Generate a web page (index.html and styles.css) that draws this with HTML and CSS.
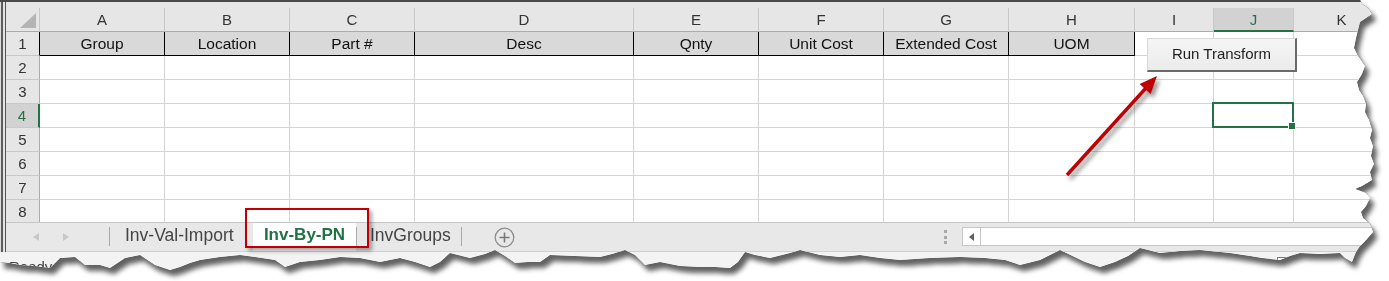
FILE: index.html
```html
<!DOCTYPE html>
<html lang="en">

<head>
    <meta charset="UTF-8">
    <title>Inv-By-PN</title>
    <link rel="stylesheet" href="styles.css">
</head>

<body>
    <div class="shot">
        <div class="paper">
            <div class="topline"></div>

            <div class="window">
                <div class="edge"></div>

                <div class="excel">
                    <div class="gridtop"></div>

                    <!-- sheet: row header + columns A..K -->
                    <div class="grid">
                        <div class="ch corner"></div>
                        <div class="ch">A</div>
                        <div class="ch">B</div>
                        <div class="ch">C</div>
                        <div class="ch">D</div>
                        <div class="ch">E</div>
                        <div class="ch">F</div>
                        <div class="ch">G</div>
                        <div class="ch">H</div>
                        <div class="ch">I</div>
                        <div class="ch cur">J</div>
                        <div class="ch">K</div>

                        <div class="rh r1">1</div>
                        <div class="c t">Group</div>
                        <div class="c t">Location</div>
                        <div class="c t">Part #</div>
                        <div class="c t">Desc</div>
                        <div class="c t">Qnty</div>
                        <div class="c t">Unit Cost</div>
                        <div class="c t">Extended Cost</div>
                        <div class="c t">UOM</div>
                        <div class="c"></div>
                        <div class="c"></div>
                        <div class="c"></div>

                        <div class="rh">2</div>
                        <div class="c"></div><div class="c"></div><div class="c"></div><div class="c"></div>
                        <div class="c"></div><div class="c"></div><div class="c"></div><div class="c"></div>
                        <div class="c"></div><div class="c"></div><div class="c"></div>

                        <div class="rh">3</div>
                        <div class="c"></div><div class="c"></div><div class="c"></div><div class="c"></div>
                        <div class="c"></div><div class="c"></div><div class="c"></div><div class="c"></div>
                        <div class="c"></div><div class="c"></div><div class="c"></div>

                        <div class="rh cur">4</div>
                        <div class="c"></div><div class="c"></div><div class="c"></div><div class="c"></div>
                        <div class="c"></div><div class="c"></div><div class="c"></div><div class="c"></div>
                        <div class="c"></div><div class="c sel"></div><div class="c"></div>

                        <div class="rh">5</div>
                        <div class="c"></div><div class="c"></div><div class="c"></div><div class="c"></div>
                        <div class="c"></div><div class="c"></div><div class="c"></div><div class="c"></div>
                        <div class="c"></div><div class="c"></div><div class="c"></div>

                        <div class="rh">6</div>
                        <div class="c"></div><div class="c"></div><div class="c"></div><div class="c"></div>
                        <div class="c"></div><div class="c"></div><div class="c"></div><div class="c"></div>
                        <div class="c"></div><div class="c"></div><div class="c"></div>

                        <div class="rh">7</div>
                        <div class="c"></div><div class="c"></div><div class="c"></div><div class="c"></div>
                        <div class="c"></div><div class="c"></div><div class="c"></div><div class="c"></div>
                        <div class="c"></div><div class="c"></div><div class="c"></div>

                        <div class="rh">8</div>
                        <div class="c"></div><div class="c"></div><div class="c"></div><div class="c"></div>
                        <div class="c"></div><div class="c"></div><div class="c"></div><div class="c"></div>
                        <div class="c"></div><div class="c"></div><div class="c"></div>
                    </div>

                    <!-- sheet tabs -->
                    <div class="tabbar">
                        <div class="nav">
                            <span class="tri-left"></span>
                            <span class="tri-right"></span>
                        </div>
                        <div class="sep"></div>
                        <div class="tab tab-first">Inv-Val-Import</div>
                        <div class="tab active">Inv-By-PN</div>
                        <div class="sep"></div>
                        <div class="tab tab-last">InvGroups</div>
                        <div class="sep"></div>
                        <div class="add">
                            <svg width="21" height="21" viewBox="0 0 21 21">
                                <circle cx="10.5" cy="10.5" r="9.3" fill="none" stroke="#8c8c8c" stroke-width="1.3"/>
                                <path d="M10.5 5.5v10M5.5 10.5h10" stroke="#7a7a7a" stroke-width="1.6"/>
                            </svg>
                        </div>
                        <div class="spacer"></div>
                        <div class="dots"></div>
                        <div class="hscroll">
                            <div class="hs-btn"><span class="hs-tri"></span></div>
                            <div class="hs-track"></div>
                        </div>
                    </div>
                </div>
            </div>

            <div class="status">
                <span class="ready">Ready</span>
                <svg class="view-icon" width="18" height="12" viewBox="0 0 18 12">
                    <rect x="0.5" y="0.5" width="17" height="11" fill="#fff" stroke="#7a7a7a"/>
                    <path d="M4 4h10M4 6.5h10M4 9h7" stroke="#7a7a7a"/>
                </svg>
            </div>

            <!-- things drawn over the sheet -->
            <div class="run-btn">Run Transform</div>
            <div class="mark"></div>
            <svg class="arrow" width="1389" height="281" viewBox="0 0 1389 281">
                <line x1="1067" y1="175" x2="1146" y2="88" stroke="#c00000" stroke-width="3.4"/>
                <polygon points="1157,76 1150.6,94 1139.6,84" fill="#c00000"/>
            </svg>
        </div>
    </div>
</body>

</html>
```

FILE: styles.css
```css
* {
    box-sizing: border-box;
}

body {
    margin: 0;
    background: #fff;
    font-family: "Liberation Sans", Arial, sans-serif;
}

/* torn screenshot look */
.shot {
    width: 1389px;
    height: 281px;
    filter: drop-shadow(0 0 0.6px rgba(0, 0, 0, 0.85)) drop-shadow(4px 6px 2.5px rgba(0, 0, 0, 0.62));
}

.paper {
    position: relative;
    width: 1389px;
    height: 281px;
    background: #fff;
    overflow: hidden;
    clip-path: polygon(0 0, 1360px 0, 1362px 4px, 1368px 8px, 1372px 14px, 1366px 18px, 1360px 22px, 1358px 30px,
        1356px 38px, 1354px 48px, 1358px 56px, 1365px 66px, 1362px 74px, 1357px 82px, 1359px 90px, 1363px 96px,
        1366px 104px, 1365px 112px, 1369px 120px, 1372px 130px, 1370px 138px, 1373px 146px, 1371px 156px,
        1374px 164px, 1370px 172px, 1372px 180px, 1362px 186px, 1355px 189px, 1366px 193px, 1370px 198px,
        1366px 206px, 1361px 212px, 1363px 218px, 1370px 224px, 1373px 232px, 1366px 240px, 1360px 246px,
        1356px 252px, 1352px 262px, 1345px 258px, 1340px 253px, 1320px 254px, 1300px 253px, 1290px 256px,
        1280px 260px, 1262px 258px, 1250px 256px, 1230px 253px, 1200px 250px, 1180px 251px, 1160px 253px,
        1140px 248px, 1128px 256px, 1115px 262px, 1100px 267px, 1085px 262px, 1060px 250px, 1050px 255px,
        1040px 260px, 1020px 265px, 1005px 260px, 985px 258px, 960px 257px, 930px 258px, 900px 260px,
        880px 258px, 860px 255px, 840px 257px, 820px 255px, 800px 250px, 790px 253px, 770px 258px,
        755px 255px, 745px 252px, 738px 262px, 730px 268px, 715px 267px, 700px 267px, 680px 266px,
        660px 262px, 645px 265px, 635px 255px, 625px 250px, 612px 254px, 600px 257px, 575px 256px,
        550px 255px, 540px 262px, 528px 262px, 515px 263px, 505px 256px, 495px 250px, 485px 254px,
        470px 258px, 458px 255px, 450px 253px, 440px 262px, 430px 267px, 415px 262px, 400px 258px,
        380px 262px, 360px 258px, 340px 257px, 320px 260px, 300px 262px, 285px 267px, 275px 260px,
        255px 257px, 240px 255px, 220px 257px, 200px 260px, 190px 263px, 180px 267px, 170px 270px,
        155px 265px, 140px 255px, 125px 258px, 110px 268px, 100px 265px, 85px 265px, 75px 257px,
        60px 258px, 50px 268px, 35px 266px, 20px 265px, 10px 263px, 0 262px);
}

.topline {
    height: 2px;
    background: #4a4a4a;
}

.window {
    display: flex;
    height: 250px;
}

.edge {
    width: 6px;
    background: linear-gradient(to right, #dedede 0 1px, #5c5c5c 1px 3px, #e4e4e4 3px 5px, #217346 5px 6px);
}

.excel {
    flex: 1;
    display: flex;
    flex-direction: column;
}

.gridtop {
    height: 6px;
    background: #e6e6e6;
}

/* sheet */
.grid {
    display: grid;
    grid-template-columns: 34px 125px 125px 125px 219px 125px 125px 125px 126px 79px 80px 1fr;
    grid-template-rows: repeat(8, 24px) 22px;
}

.grid > div {
    position: relative;
    border-right: 1px solid #d4d4d4;
    border-bottom: 1px solid #d4d4d4;
    background: #fff;
    font-size: 15px;
    line-height: 24px;
    text-align: center;
    white-space: nowrap;
}

.grid > div:nth-child(12n) {
    border-right: none;
}

.grid > div:nth-last-child(-n+12) {
    border-bottom: none;
}

.grid > .ch {
    background: #e6e6e6;
    color: #333;
    line-height: 23px;
    border-right-color: #c8c8c8;
    border-bottom-color: #ababab;
}

.grid > .ch.cur {
    background: #d2d2d2;
    color: #217346;
    border-bottom: 2px solid #217346;
}

.corner::after {
    content: '';
    position: absolute;
    right: 3px;
    bottom: 3px;
    width: 16px;
    height: 15px;
    background: #b4b4b4;
    clip-path: polygon(100% 0, 100% 100%, 0 100%);
}

.grid > .rh {
    background: #e6e6e6;
    color: #333;
    border-right-color: #ababab;
    border-bottom-color: #c8c8c8;
}

.grid > .rh.r1 {
    border-right-color: #000;
}

.grid > .rh.cur {
    background: #d2d2d2;
    color: #217346;
    border-right: 2px solid #217346;
}

/* header row of the table */
.grid > .t {
    background: #d9d9d9;
    color: #111;
    font-size: 15.5px;
    border-right-color: #000;
    border-bottom-color: #000;
}

.grid > .sel::after {
    content: '';
    position: absolute;
    left: -2px;
    top: -2px;
    right: -1px;
    bottom: -1px;
    border: 2px solid #217346;
}

.grid > .sel::before {
    content: '';
    position: absolute;
    right: -3px;
    bottom: -3px;
    width: 6px;
    height: 6px;
    background: #217346;
    border: 1px solid #fff;
    z-index: 2;
}

/* sheet tabs */
.tabbar {
    display: flex;
    height: 30px;
    background: #e8e8e8;
    border-top: 1px solid #c6c6c6;
    border-bottom: 1px solid #d0d0d0;
}

.nav {
    width: 103px;
    display: flex;
    align-items: center;
    gap: 24px;
    padding-left: 27px;
}

.tri-left {
    border-top: 4.5px solid transparent;
    border-bottom: 4.5px solid transparent;
    border-right: 6px solid #c8c8c8;
}

.tri-right {
    border-top: 4.5px solid transparent;
    border-bottom: 4.5px solid transparent;
    border-left: 6px solid #c8c8c8;
}

.sep {
    width: 1px;
    height: 19px;
    margin-top: 4px;
    background: #a8a8a8;
}

.tab {
    font-size: 17.5px;
    line-height: 20px;
    padding-top: 2px;
    color: #444;
    white-space: nowrap;
}

.tab-first {
    width: 143px;
    padding-left: 15px;
}

.tab.active {
    width: 103px;
    text-align: center;
    background: #fff;
    color: #217346;
    font-weight: bold;
    font-size: 17px;
}

.tab-last {
    width: 104px;
    padding-left: 13px;
}

.add {
    margin-left: 32px;
    display: flex;
    align-items: center;
}

.spacer {
    flex: 1;
}

.dots {
    width: 3px;
    height: 14px;
    margin-top: 7px;
    margin-right: 15px;
    background: repeating-linear-gradient(#a8a8a8 0 3px, transparent 3px 5.5px);
}

.hscroll {
    width: 427px;
    height: 19px;
    margin-top: 4px;
    display: flex;
    background: #fff;
    border: 1px solid #c6c6c6;
    border-right: none;
}

.hs-btn {
    width: 18px;
    border-right: 1px solid #c6c6c6;
    display: flex;
    align-items: center;
    justify-content: center;
}

.hs-tri {
    border-top: 4px solid transparent;
    border-bottom: 4px solid transparent;
    border-right: 5px solid #606060;
}

.hs-track {
    flex: 1;
}

/* status bar */
.status {
    display: flex;
    height: 29px;
    padding-left: 9px;
    background: #f3f3f3;
    color: #444;
}

.ready {
    font-size: 15px;
    line-height: 17px;
    padding-top: 6px;
}

.view-icon {
    margin-left: auto;
    margin-right: 94px;
    margin-top: 5px;
}

/* overlays */
.run-btn {
    position: absolute;
    left: 1147px;
    top: 38px;
    width: 150px;
    height: 34px;
    padding-bottom: 2px;
    display: flex;
    align-items: center;
    justify-content: center;
    font-size: 15px;
    color: #1e1e1e;
    background: linear-gradient(#f5f5f5, #ebebeb);
    border: 1px solid #d8d8d8;
    border-right: 2px solid #6a6a6a;
    border-bottom: 2px solid #6a6a6a;
}

.mark {
    position: absolute;
    left: 245px;
    top: 208px;
    width: 124px;
    height: 40px;
    border: 2px solid #c00000;
    box-shadow: 3px 3px 4px rgba(0, 0, 0, 0.35);
}

.arrow {
    position: absolute;
    left: 0;
    top: 0;
    pointer-events: none;
    filter: drop-shadow(3px 4px 2px rgba(0, 0, 0, 0.4));
}
```
